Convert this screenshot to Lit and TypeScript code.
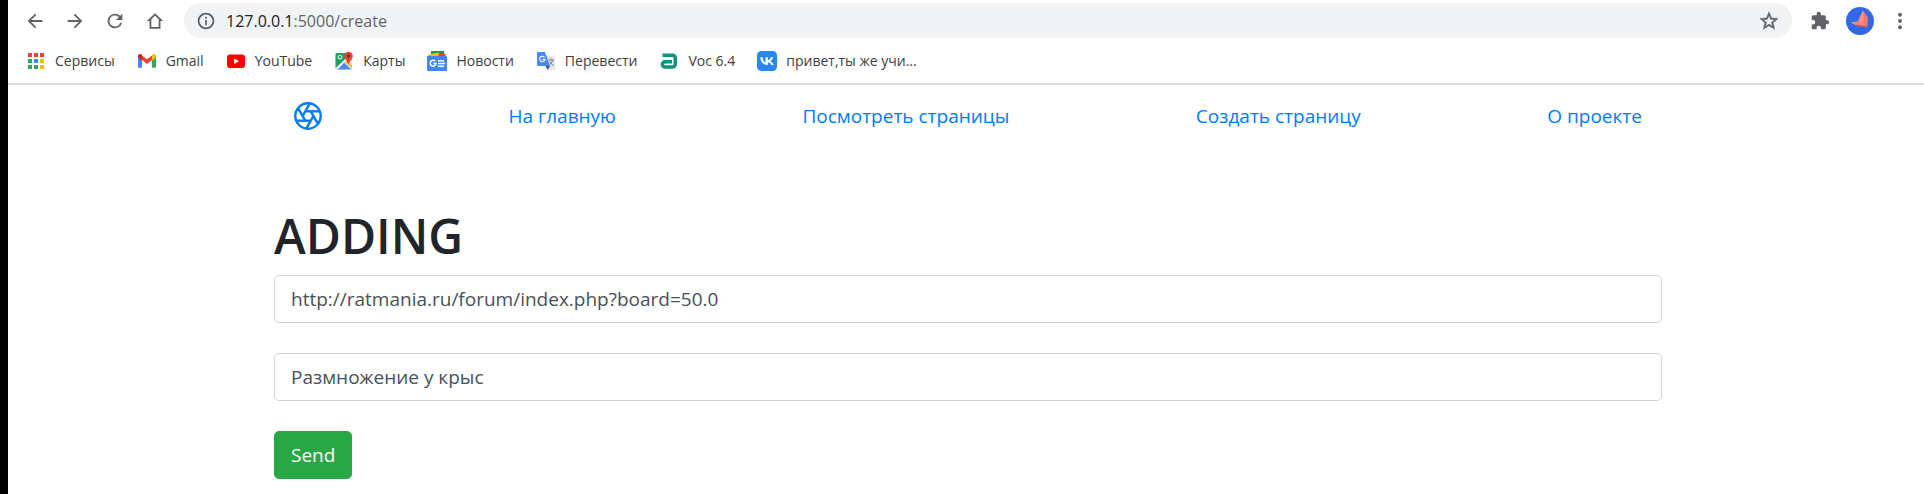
import { LitElement, html, css, svg } from "lit";
import { customElement } from "lit/decorators.js";

const icons = {
  back: svg`<path d="M20 11H7.8l5.6-5.6L12 4l-8 8 8 8 1.4-1.4L7.8 13H20z"/>`,
  forward: svg`<path d="M4 11h12.2l-5.6-5.6L12 4l8 8-8 8-1.4-1.4 5.6-5.6H4z"/>`,
  reload: svg`<path d="M17.65 6.35A8 8 0 1 0 19.73 14h-2.08A6 6 0 1 1 12 6c1.66 0 3.14.69 4.22 1.78L13 11h7V4z"/>`,
  home: svg`<path d="M12 3.6 3 12h3v8.4h12V12h3zM12 6.3l4 3.8v8.4H8v-8.4z" fill-rule="evenodd"/>`,
  info: svg`<path d="M12 2a10 10 0 1 0 0 20 10 10 0 0 0 0-20zm0 17.8a7.8 7.8 0 1 1 0-15.600 7.800 7.800 0 0 1 0 15.600zM11 7h2v2.200h-2zM11 10.800h2V17h-2z" fill-rule="evenodd"/>`,
  star: svg`<path d="m22 9.240-7.190-.620L12 2 9.190 8.630 2 9.240l5.460 4.730L5.820 21 12 17.270 18.180 21l-1.630-7.030zM12 15.400l-3.760 2.270 1-4.280-3.320-2.880 4.380-.380L12 6.100l1.710 4.040 4.380.380-3.320 2.880 1 4.280z" stroke="#5f6368" stroke-width=".5"/>`,
  puzzle: svg`<path d="M20.500 11H19V7a2 2 0 0 0-2-2h-4V3.500a2.500 2.500 0 0 0-5 0V5H4a2 2 0 0 0-2 2v3.800h1.500a2.700 2.700 0 0 1 0 5.400H2V20c0 1.100.9 2 2 2h3.800v-1.500a2.700 2.700 0 0 1 5.400 0V22H17a2 2 0 0 0 2-2v-4h1.500a2.500 2.500 0 0 0 0-5z"/>`,
  dots: svg`<circle cx="12" cy="4.500" r="2.300"/><circle cx="12" cy="12" r="2.300"/><circle cx="12" cy="19.500" r="2.300"/>`,
};

const favicons = {
  apps: svg`
    <path fill="#ea4335" d="M2 2h4v4H2zM8 2h4v4H8zM14 2h4v4h-4z"/>
    <path fill="#34a853" d="M2 8h4v4H2zM2 14h4v4H2zM8 14h4v4H8z"/>
    <path fill="#4285f4" d="M8 8h4v4H8z"/>
    <path fill="#fbbc04" d="M14 8h4v4h-4zM14 14h4v4h-4z"/>`,
  gmail: svg`
    <path fill="#4285f4" d="M1 6v9.500c0 .8.600 1.300 1.300 1.300H5V9z"/>
    <path fill="#34a853" d="M19 6v9.500c0 .8-.6 1.300-1.300 1.300H15V9z"/>
    <path fill="#ea4335" d="M5 9V4.500l5 3.800 5-3.800V9l-5 3.900z"/>
    <path fill="#c5221f" d="M1 6.300V5c0-1.800 2-2.600 3.300-1.500L5 4.100V9.400z"/>
    <path fill="#fbbc04" d="M19 6.300V5c0-1.800-2-2.600-3.300-1.500l-.7.600v5.300z"/>`,
  youtube: svg`
    <rect x="1" y="3.500" width="18" height="13.500" rx="3" fill="#f00"/>
    <path fill="#fff" d="M8.200 7.500v5.500l4.800-2.750z"/>`,
  maps: svg`
    <rect x="1.500" y="2" width="16.500" height="16.500" rx="1.500" fill="#dadce0"/>
    <path fill="#1ea362" d="M3 2h10l-1 7-9.300 9A1.500 1.500 0 0 1 1.500 16.500v-13A1.500 1.500 0 0 1 3 2z"/>
    <path fill="#4a89f3" d="m10 11.500 7 7H3z"/>
    <path fill="#fff" d="m1.800 17 12-11.500 1.200 1.300L3.400 18.500z"/>
    <path fill="#fbbc04" d="m12.500 9.500 5.500 5.300v2.500l-6.700-6.600z"/>
    <circle cx="6" cy="6.200" r="1.900" fill="none" stroke="#fff" stroke-width="1"/>
    <path fill="#e34133" d="M14.500.8a4.200 4.200 0 0 1 4.200 4.200c0 3-2.700 4.200-4.200 8.500-1.500-4.300-4.200-5.500-4.200-8.500A4.200 4.200 0 0 1 14.500.8z"/>
    <circle cx="14.500" cy="5" r="1.500" fill="#7b231e"/>`,
  news: svg`
    <path fill="#0f9d58" d="M4 0h13v5H4z"/>
    <path fill="#fbbc04" d="m1 3.500 11-2 2 4H1z"/>
    <path fill="#ea4335" d="m12 2 7 1-1 3h-7z"/>
    <rect x="0" y="5" width="20" height="15" rx="1" fill="#4285f4"/>
    <path d="M8.200 10.200A2.900 2.900 0 1 0 9 12.600H6.400" fill="none" stroke="#fff" stroke-width="1.500"/>
    <path d="M11 9.700h6M11 12.500h7M11 15.300h6" stroke="#fff" stroke-width="1.500"/>`,
  translate: svg`
    <path fill="#e4e6e9" d="M8 5h9.500A1.500 1.500 0 0 1 19 6.500v11a1.500 1.500 0 0 1-1.500 1.500H12z"/>
    <path fill="#4a89f3" d="M2 1h7l5 14H2.500A1.500 1.500 0 0 1 1 13.500V2a1 1 0 0 1 1-1z"/>
    <path fill="#3749c5" d="M9.500 15H14l-2.300 4z"/>
    <path d="M8.400 6.200A2.700 2.700 0 1 0 9 8.400H6.500" fill="none" stroke="#fff" stroke-width="1.200"/>
    <path d="M12.500 9h5.500M15 7.500V9M16.800 9c-.5 2.500-2 4-3.300 5M13.800 10.500c1 2 2.500 3.300 4 4" fill="none" stroke="#71808a" stroke-width="1"/>`,
  voc: svg`
    <path d="M3.500 4.200h9.800a3 3 0 0 1 3 3v5.800a3 3 0 0 1-3 3H6a2.600 2.600 0 0 1-2.600-2.600 2.600 2.600 0 0 1 2.600-2.600H13" fill="none" stroke="#0b9482" stroke-width="3.600"/>`,
  vk: svg`
    <rect width="20" height="20" rx="4.500" fill="#2787f5"/>
    <path fill="#fff" d="M10.600 14C6 14 3.400 11 3.300 6.300h2.400c.1 3.400 1.600 4.900 2.800 5.200V6.300h2.300v3c1.300-.2 2.700-1.500 3.200-3h2.300a6.500 6.500 0 0 1-2.900 3.900 7 7 0 0 1 3.400 3.800h-2.500c-.5-1.300-1.800-2.500-3.500-2.700V14z"/>`,
};

const bookmarks = [
  { icon: favicons.apps, label: "Сервисы" },
  { icon: favicons.gmail, label: "Gmail" },
  { icon: favicons.youtube, label: "YouTube" },
  { icon: favicons.maps, label: "Карты" },
  { icon: favicons.news, label: "Новости" },
  { icon: favicons.translate, label: "Перевести" },
  { icon: favicons.voc, label: "Voc 6.4" },
  { icon: favicons.vk, label: "привет,ты же учи..." },
];

@customElement("browser-bar")
class BrowserBar extends LitElement {
  static styles = css`
    :host { display: block; border-bottom: 2px solid #dadcdc; background: #fff; }
    * { box-sizing: border-box; }
    button { border: 0; padding: 0; background: none; display: flex; cursor: pointer; color: #5f6368; }
    .icon { width: 22px; height: 22px; fill: #5f6368; display: block; flex: none; }
    .toolbar { display: flex; align-items: center; padding: 3px 14px 0 16px; }
    .actions { display: flex; gap: 18px; margin-right: 18px; }
    .address { flex: 1; height: 35px; display: flex; align-items: center; gap: 10px; padding: 0 12px;
      border-radius: 18px; background: #f1f3f4; }
    .small { width: 20px; height: 20px; }
    .url { flex: 1; font-size: 16px; line-height: 24px; color: #5f6368; }
    .host { color: #202124; }
    .side { display: flex; align-items: center; gap: 16px; margin-left: 18px; }
    .avatar { width: 28px; height: 28px; display: block; }
    .bookmarks { display: flex; align-items: center; gap: 22px; height: 45px; padding: 0 18px; }
    .bookmark { display: flex; align-items: center; gap: 9px; color: #3c4043; text-decoration: none;
      font-size: 14px; line-height: 20px; white-space: nowrap; }
    .favicon { width: 20px; height: 20px; flex: none; }
  `;

  icon(shape: unknown, size = "") {
    return html`<svg class="icon ${size}" viewBox="0 0 24 24" aria-hidden="true">${shape}</svg>`;
  }

  render() {
    return html`
      <div class="toolbar">
        <div class="actions">
          <button aria-label="Назад">${this.icon(icons.back)}</button>
          <button aria-label="Вперёд">${this.icon(icons.forward)}</button>
          <button aria-label="Обновить">${this.icon(icons.reload)}</button>
          <button aria-label="Домой">${this.icon(icons.home)}</button>
        </div>
        <div class="address">
          ${this.icon(icons.info, "small")}
          <div class="url"><span class="host">127.0.0.1</span>:5000/create</div>
          <button aria-label="Добавить в закладки">${this.icon(icons.star)}</button>
        </div>
        <div class="side">
          <button aria-label="Расширения">${this.icon(icons.puzzle, "small")}</button>
          <button aria-label="Профиль">
            <svg class="avatar" viewBox="0 0 28 28" aria-hidden="true">
              <circle cx="14" cy="14" r="14" fill="#2f69e6"/>
              <path fill="#f0776b" d="M17 3.500 22 10.500l-.5 8L12 14.500z"/>
              <path fill="#ff9384" d="m17 3.500 1 12-6-1.500z"/>
              <path fill="#f58a7c" d="m4.500 15.500 9-1.500 8 4.500-.5 2-10-1.500z"/>
              <path fill="#c94f56" d="m9 17.500 12 1.500v1.500l-10-1.500z"/>
            </svg>
          </button>
          <button aria-label="Меню">${this.icon(icons.dots, "small")}</button>
        </div>
      </div>
      <nav class="bookmarks" aria-label="Закладки">
        ${bookmarks.map((b) => html`
          <a class="bookmark" href="#">
            <svg class="favicon" viewBox="0 0 20 20" aria-hidden="true">${b.icon}</svg>${b.label}
          </a>`)}
      </nav>
    `;
  }
}

@customElement("app-root")
class AppRoot extends LitElement {
  static styles = css`
    :host { display: block; min-height: 100vh; box-sizing: border-box; border-left: 8px solid #000;
      background: #fff; color: #212529; font-family: "Open Sans", "Noto Sans", sans-serif; }
    * { box-sizing: border-box; }
    .page { padding-left: 4px; }
    .container { max-width: 1388px; margin: 0 auto; }
    .menu { display: flex; justify-content: space-between; align-items: center; padding: 11px 20px; }
    .link { display: block; color: #007bff; text-decoration: none; font-size: 19px; line-height: 40px; }
    .logo { width: 28px; height: 28px; display: block; fill: none; stroke: #007bff; stroke-width: 2.4; }
    .title { margin: 58px 0 8px; font-size: 48px; line-height: 62px; font-weight: 600; }
    .form { display: flex; flex-direction: column; align-items: flex-start; gap: 30px; }
    .field { width: 100%; height: 48px; padding: 0 16px; border: 1px solid #ced4da; border-radius: 5px;
      background: #fff; color: #495057; font-family: inherit; font-size: 19px; }
    .send { height: 48px; padding: 0 16px; border: 1px solid #28a745; border-radius: 5px;
      background: #28a745; color: #fff; font-family: inherit; font-size: 19px; cursor: pointer; }
  `;

  render() {
    return html`
      <browser-bar></browser-bar>
      <div class="page">
        <div class="container">
          <nav class="menu">
            <a class="link" href="#" aria-label="Логотип">
              <svg class="logo" viewBox="-14 -14 28 28" aria-hidden="true">
                <circle r="12.700"/>
                ${[0, 60, 120, 180, 240, 300].map((a) => svg`<path d="M-11.800 4.700H2.700" transform="rotate(${a})"/>`)}
              </svg>
            </a>
            <a class="link" href="#">На главную</a>
            <a class="link" href="#">Посмотреть страницы</a>
            <a class="link" href="#">Создать страницу</a>
            <a class="link" href="#">О проекте</a>
          </nav>
          <main>
            <h1 class="title">ADDING</h1>
            <form class="form" @submit=${(e: Event) => e.preventDefault()}>
              <input class="field" type="text" name="url" aria-label="URL" .value=${"http://ratmania.ru/forum/index.php?board=50.0"}>
              <input class="field" type="text" name="title" aria-label="Название" .value=${"Размножение у крыс"}>
              <button class="send" type="submit">Send</button>
            </form>
          </main>
        </div>
      </div>
    `;
  }
}
